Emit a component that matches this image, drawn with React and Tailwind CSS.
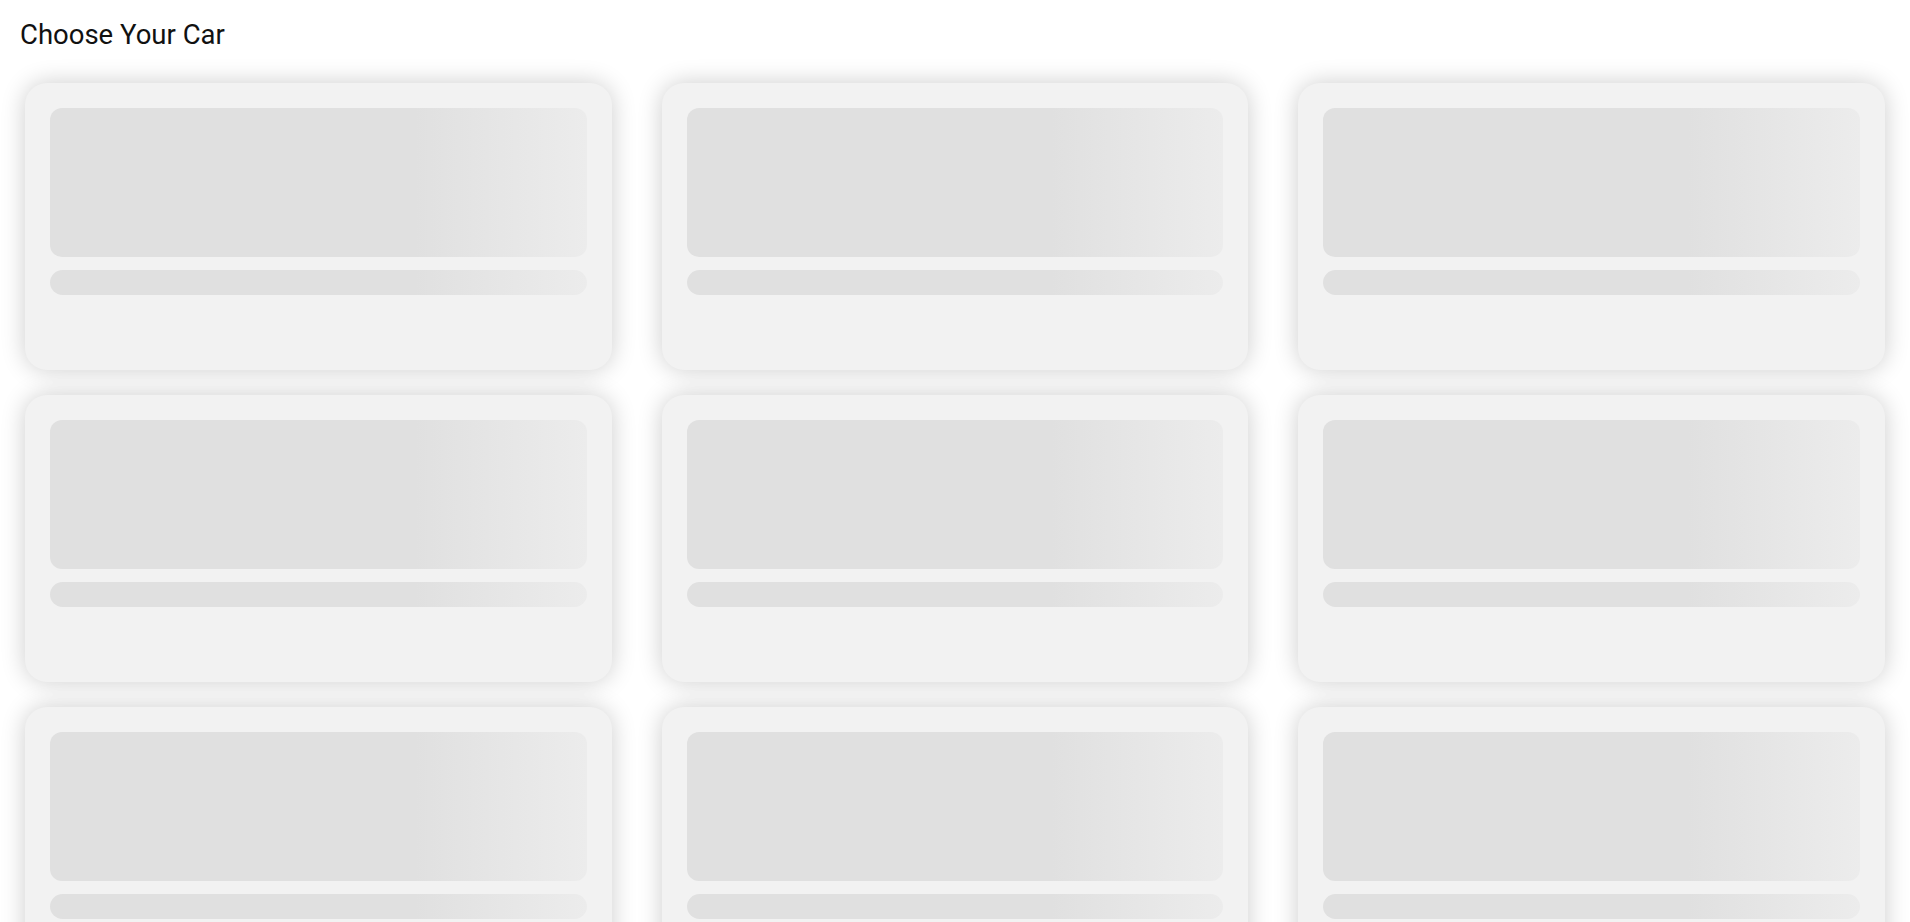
const cars = Array.from({length: 9}, (_, i) => i);

// Skeleton card shown while cars load
const CarSkeleton = () => {
  return (
    <div className="h-[287px] rounded-[22px] bg-[#f2f2f2] px-[25px] pt-[25px] shadow-[0_0_24px_rgba(0,0,0,0.2)]">
      <div className="h-[149px] rounded-[12px] bg-[linear-gradient(90deg,#e0e0e0_0%,#e0e0e0_68%,#ececec_100%)]" />
      <div className="mt-[13px] h-[25px] rounded-full bg-[linear-gradient(90deg,#e0e0e0_0%,#e0e0e0_68%,#ececec_100%)]" />
    </div>
  );
};

export default function App() {
  return (
    <div className="min-h-screen bg-white px-[25px] pb-[25px] font-['Roboto',sans-serif]">
      <h1 className="pt-[19px] -ml-[5px] text-[27.5px] leading-[32px] font-normal text-[#111]">
        Choose Your Car
      </h1>
      <div className="mt-[32px] grid grid-cols-3 gap-x-[50px] gap-y-[25px]">
        {cars.map((c) => (
          <CarSkeleton key={c} />
        ))}
      </div>
    </div>
  );
}
